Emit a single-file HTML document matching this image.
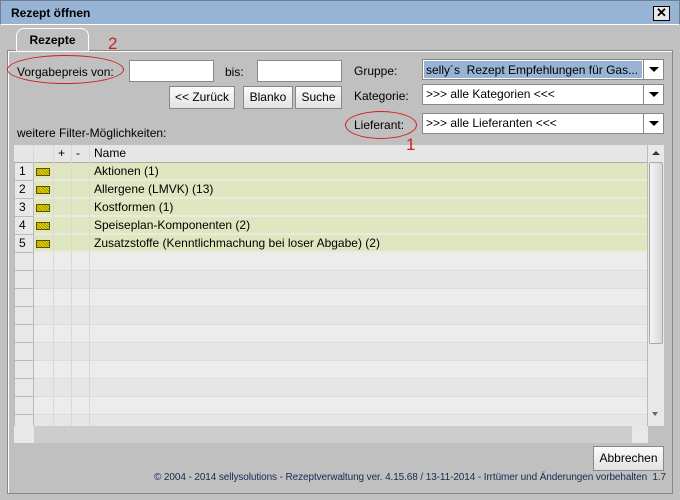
<!DOCTYPE html>
<html><head><meta charset="utf-8"><style>
*{box-sizing:border-box;margin:0;padding:0}
body{width:680px;height:500px;background:#c0c0c0;font-family:"Liberation Sans",sans-serif;font-size:12px;color:#000;position:relative;overflow:hidden}
.a{position:absolute}
.title{left:0;top:0;width:680px;height:25px;background:#98b4d4;border:1px solid #6f7f90;border-bottom:1px solid #fff}
.title span{position:absolute;left:10px;top:5px;font-weight:bold;font-size:12px}
.close{left:653px;top:6px;width:17px;height:15px;border:1px solid #000;background:#e8e8e8;font-size:13px;line-height:12px;text-align:center;font-weight:bold}
.panel{left:7px;top:50px;width:666px;height:444px;border:1px solid #888;box-shadow:inset 1px 1px 0 #fff}
.tab{left:16px;top:28px;width:73px;height:23px;background:#c0c0c0;border:1px solid #fff;border-bottom:none;border-radius:8px 8px 0 0;font-weight:bold;text-align:center;line-height:22px;font-size:12px}
input{position:absolute;border:1px solid #888;background:#fff;height:22px}
.btn{position:absolute;height:23px;border:1px solid #888;background:linear-gradient(#fbfbfb,#e2e2e2);text-align:center;line-height:21px;font-size:12px}
.combo{position:absolute;left:422px;width:242px;height:21px;border:1px solid #888;background:#fff;font-size:12px;line-height:18px;padding-left:3px}
.combo i{position:absolute;right:0;top:0;width:20px;height:19px;border-left:1px solid #888;background:#fff}
.combo i:after{content:"";position:absolute;left:5px;top:7px;border-left:5px solid transparent;border-right:5px solid transparent;border-top:5px solid #000}
.lbl{position:absolute;font-size:12px}
.red{position:absolute;border:1.5px solid #d02020;border-radius:50%;z-index:5}
.rn{position:absolute;color:#d02020;font-size:17px;z-index:5}
.grid{left:14px;top:145px;width:634px;height:281px;background:#ececec;overflow:hidden}
.row{position:absolute;left:0;width:634px;height:18px;border-bottom:1px solid #dcdcdc}
.c{position:absolute;top:0;height:18px;border-right:1px solid #d8d8d8;padding-left:4px;line-height:17px}
.num{background:#e8e8e8;border:1px solid #bbb;border-top:none}
.ic{position:absolute;left:23px;top:6px;width:14px;height:8px;background:repeating-linear-gradient(45deg,#e8e000 0 1px,#a09000 1px 2px);border:1px solid #5a5000}
</style></head><body>
<div class="a title"><span>Rezept öffnen</span></div>
<div class="a close">✕</div>
<div class="a panel"></div>
<div class="a tab">Rezepte</div>
<div class="rn" style="left:108px;top:34px">2</div>
<div class="lbl" style="left:17px;top:65px">Vorgabepreis von:</div>
<div class="red" style="left:7px;top:55px;width:117px;height:29px"></div>
<input style="left:129px;top:60px;width:85px">
<div class="lbl" style="left:225px;top:65px">bis:</div>
<input style="left:257px;top:60px;width:85px">
<div class="btn" style="left:169px;top:86px;width:66px">&lt;&lt; Zurück</div>
<div class="btn" style="left:243px;top:86px;width:50px">Blanko</div>
<div class="btn" style="left:295px;top:86px;width:47px">Suche</div>
<div class="lbl" style="left:354px;top:64px">Gruppe:</div>
<div class="lbl" style="left:354px;top:89px">Kategorie:</div>
<div class="lbl" style="left:354px;top:118px">Lieferant:</div>
<div class="red" style="left:345px;top:111px;width:72px;height:28px"></div>
<div class="rn" style="left:406px;top:135px">1</div>
<div class="combo" style="top:59px;background:#fff"><span style="display:block;position:absolute;left:1px;top:1px;width:218px;height:17px;background:#98b4d4;padding-left:2px">selly´s &nbsp;Rezept Empfehlungen für Gas...</span><i></i></div>
<div class="combo" style="top:84px">&gt;&gt;&gt; alle Kategorien &lt;&lt;&lt;<i></i></div>
<div class="combo" style="top:113px">&gt;&gt;&gt; alle Lieferanten &lt;&lt;&lt;<i></i></div>
<div class="lbl" style="left:17px;top:126px">weitere Filter-Möglichkeiten:</div>
<div class="a grid">
<div class="row" style="top:0;height:18px;background:#e6e6e6;border-bottom:1px solid #aaa">
<div class="c" style="left:0;width:20px"></div><div class="c" style="left:20px;width:20px"></div><div class="c" style="left:40px;width:18px">+</div><div class="c" style="left:58px;width:18px">-</div><div class="c" style="left:76px;width:500px;border:none">Name</div></div>
</div>
<div class="a" style="left:647px;top:145px;width:17px;height:281px;background:#e8e8e8;border-left:1px solid #bbb">
<div class="a" style="left:4px;top:6px;border-left:4px solid transparent;border-right:4px solid transparent;border-bottom:4px solid #333"></div>
<div class="a" style="left:1px;top:17px;width:14px;height:182px;background:linear-gradient(90deg,#f4f4f4,#d8d8d8);border:1px solid #aaa;border-radius:2px"></div>
<div class="a" style="left:4px;top:267px;border-left:3px solid transparent;border-right:3px solid transparent;border-top:4px solid #666"></div>
</div>
<div class="a" style="left:14px;top:426px;width:634px;height:17px;background:#cdcdcd">
<div class="a" style="left:0;top:0;width:20px;height:17px;background:#e8e8e8"></div>
<div class="a" style="left:618px;top:0;width:16px;height:17px;background:#e8e8e8"></div>
</div>
<div class="btn" style="left:593px;top:446px;width:71px;height:25px;line-height:23px">Abbrechen</div>
<div class="a" style="right:14px;top:472px;font-size:10px;color:#1a2a50;letter-spacing:-0.1px">© 2004 - 2014 sellysolutions - Rezeptverwaltung ver. 4.15.68 / 13-11-2014 - Irrtümer und Änderungen vorbehalten &nbsp;1.7</div>
<script>
var g=document.querySelector('.grid');
var names=["Aktionen (1)","Allergene (LMVK) (13)","Kostformen (1)","Speiseplan-Komponenten (2)","Zusatzstoffe (Kenntlichmachung bei loser Abgabe) (2)"];
for(var i=0;i<15;i++){var t=18+i*18;var d=document.createElement('div');d.className='row';
var bg=i<5?'#e0e6c0':(i%2?'#ececec':'#e6e6e6');d.style.top=t+'px';d.style.background=bg;if(i<5)d.style.borderBottom='2px solid #e8ece0';
d.innerHTML='<div class="c num" style="left:0;width:20px">'+(i<5?(i+1):'')+'</div><div class="c" style="left:20px;width:20px">'+(i<5?'<span class="ic" style="left:2px;top:5px"></span>':'')+'</div><div class="c" style="left:40px;width:18px"></div><div class="c" style="left:58px;width:18px"></div><div class="c" style="left:76px;width:550px;border:none">'+(i<5?names[i]:'')+'</div>';
g.appendChild(d);}
</script>
</body></html>
